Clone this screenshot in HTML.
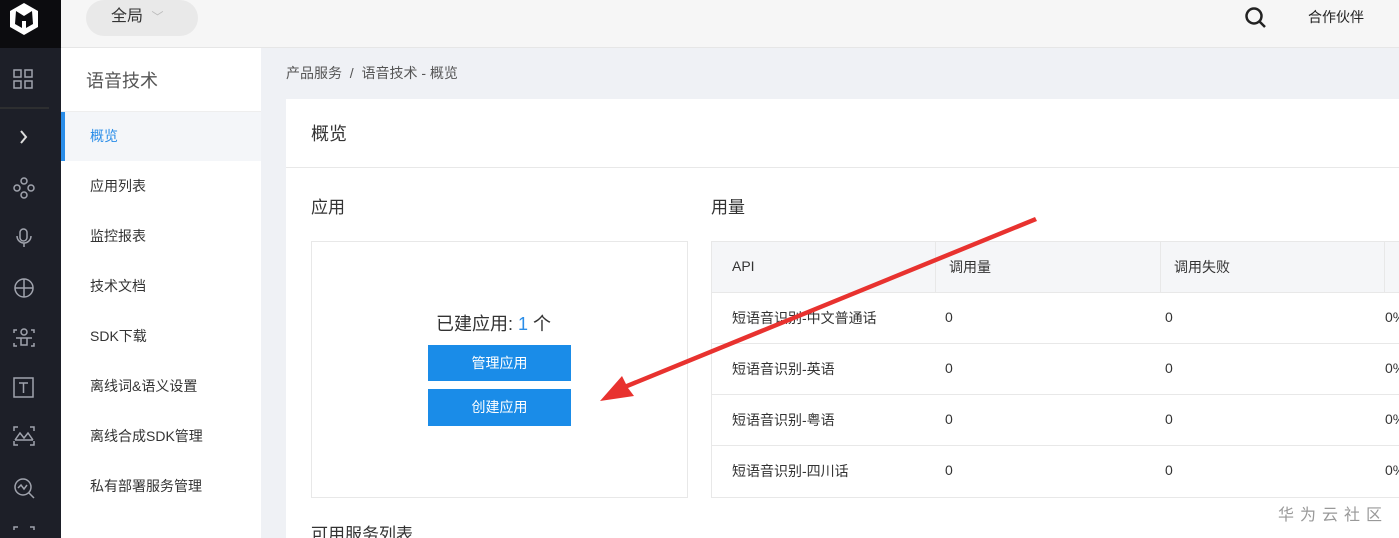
<!DOCTYPE html>
<html style="width:1399px;height:538px;overflow:hidden"><head><meta charset="utf-8"><style>
*{margin:0;padding:0;box-sizing:border-box}
body{width:1399px;height:538px;overflow:hidden;position:relative;background:#eff1f5;font-family:"Liberation Sans","Noto Sans CJK SC",sans-serif;color:#333}
.abs{position:absolute}
#rail{left:0;top:0;width:61px;height:538px;background:#1d1f28}
#logo{left:0;top:0;width:61px;height:48px;background:#0c0c0f}
#top{left:61px;top:0;width:1338px;height:48px;background:#f6f6f6;border-bottom:1px solid #e6e6e6}
#side{left:61px;top:48px;width:200px;height:490px;background:#fff}
.nav{position:absolute;left:29px;font-size:14px;color:#333}
.cell{position:absolute;font-size:14px;color:#333}
</style></head><body>
<div id="rail" class="abs"></div>
<div id="logo" class="abs">
<svg width="61" height="48"><path d="M24 3 L38 11 L38 27 L24 35 L10 27 L10 11 Z" fill="#fff"/><path d="M16 11 L24 16 L32 11 L33 24 L26 28 L26 21 L22 21 L22 28 L15 24 Z" fill="#0c0c0f"/></svg></div>
<svg class="abs" style="left:0;top:48px" width="61" height="490" fill="none" stroke="#a0a3ad" stroke-width="1.5">
<rect x="14" y="22" width="7" height="7"/><rect x="25" y="22" width="7" height="7"/><rect x="14" y="33" width="7" height="7"/><rect x="25" y="33" width="7" height="7"/>
<line x1="0" y1="60" x2="49" y2="60" stroke="#333"/>
<path d="M21 83 L26 89 L21 95" stroke="#ddd" stroke-width="2"/>
<circle cx="24" cy="133" r="3"/><circle cx="17" cy="140" r="3"/><circle cx="31" cy="140" r="3"/><circle cx="24" cy="147" r="3"/>
<rect x="20" y="181" width="7" height="12" rx="3.5"/><path d="M17 188 a7 7 0 0 0 14 0 M24 195 v4"/>
<circle cx="24" cy="240" r="9"/><path d="M15 240 h18 M24 231 v18"/>
<path d="M14 285 v-3 h3 M31 282 h3 v3 M14 295 v3 h3 M31 298 h3 v-3"/><circle cx="24" cy="284" r="3"/><path d="M16 290 h16 M21 290 v7 h6 v-7"/>
<rect x="14" y="330" width="19" height="19"/><path d="M19 335 h9 M23.5 335 v10"/>
<path d="M14 383 v-4 h4 M30 379 h4 v4 M14 393 v4 h4 M30 397 h4 v-4 M15 392 l5 -7 l4 5 l4 -5 l5 7 M15 392 h18"/>
<circle cx="23" cy="439" r="8"/><path d="M29 445 l5 5 M18 440 l3 -3 l3 4 l3 -4"/>
<path d="M14 482 v-3 h4 M30 479 h4 v3"/>
</svg>
<div id="top" class="abs">
<div class="abs" style="left:25px;top:0;width:112px;height:36px;border-radius:18px;background:#e9e9e9;font-size:16px;line-height:34px;padding-left:25px;color:#333">全局 <span style="color:#bbb;font-size:12px;margin-left:4px">﹀</span></div>
<svg class="abs" style="left:1182px;top:6px" width="26" height="26" fill="none" stroke="#222" stroke-width="2.5"><circle cx="11" cy="10" r="7.5"/><path d="M16.5 15.5 L22 21"/></svg>
<div class="abs" style="left:1247px;top:7px;font-size:14px;color:#222">合作伙伴</div>
</div>
<div id="side" class="abs">
<div class="abs" style="left:25px;top:19px;font-size:18px;color:#555">语音技术</div>
<div class="abs" style="left:0;top:63px;width:200px;height:1px;background:#eee"></div>
<div class="abs" style="left:0;top:64px;width:200px;height:49px;background:#f4f6f9;border-left:4px solid #2a8de8"></div>
<div class="nav" style="top:78px;color:#2a8de8">概览</div>
<div class="nav" style="top:128px">应用列表</div>
<div class="nav" style="top:178px">监控报表</div>
<div class="nav" style="top:228px">技术文档</div>
<div class="nav" style="top:278px">SDK下载</div>
<div class="nav" style="top:328px">离线词&amp;语义设置</div>
<div class="nav" style="top:378px">离线合成SDK管理</div>
<div class="nav" style="top:428px">私有部署服务管理</div>
</div>
<div class="abs" style="left:286px;top:63px;font-size:14px;color:#555">产品服务 &nbsp;/ &nbsp;语音技术 - 概览</div>
<div class="abs" style="left:286px;top:99px;width:1113px;height:439px;background:#fff"></div>
<div class="abs" style="left:311px;top:120px;font-size:18px;color:#333">概览</div>
<div class="abs" style="left:286px;top:167px;width:1113px;height:1px;background:#e8e8e8"></div>
<div class="abs" style="left:311px;top:193px;font-size:17px">应用</div>
<div class="abs" style="left:711px;top:193px;font-size:17px">用量</div>
<div class="abs" style="left:311px;top:241px;width:377px;height:257px;border:1px solid #e8e8e8"></div>
<div class="abs" style="left:436px;top:310px;font-size:18px;color:#333">已建应用: <span style="color:#2a8de8">1</span> 个</div>
<div class="abs" style="left:428px;top:345px;width:143px;height:36px;background:#1a8ce8;color:#fff;font-size:14px;text-align:center;line-height:36px">管理应用</div>
<div class="abs" style="left:428px;top:389px;width:143px;height:37px;background:#1a8ce8;color:#fff;font-size:14px;text-align:center;line-height:37px">创建应用</div>
<div class="abs" style="left:711px;top:241px;width:688px;height:257px;border:1px solid #e8e8e8;border-right:none"></div>
<div class="abs" style="left:712px;top:242px;width:687px;height:50px;background:#f5f6f8"></div>
<div class="abs" style="left:935px;top:242px;width:1px;height:50px;background:#e8e8e8"></div>
<div class="abs" style="left:1160px;top:242px;width:1px;height:50px;background:#e8e8e8"></div>
<div class="abs" style="left:1384px;top:242px;width:1px;height:50px;background:#e8e8e8"></div>
<div class="cell" style="left:732px;top:258px">API</div>
<div class="cell" style="left:949px;top:257px">调用量</div>
<div class="cell" style="left:1174px;top:257px">调用失败</div>
<div class="abs" style="left:712px;top:292px;width:687px;height:1px;background:#e8e8e8"></div>
<div class="abs" style="left:712px;top:343px;width:687px;height:1px;background:#e8e8e8"></div>
<div class="abs" style="left:712px;top:394px;width:687px;height:1px;background:#e8e8e8"></div>
<div class="abs" style="left:712px;top:445px;width:687px;height:1px;background:#e8e8e8"></div>
<div class="cell" style="left:732px;top:308px">短语音识别-中文普通话</div><div class="cell" style="left:945px;top:309px">0</div><div class="cell" style="left:1165px;top:309px">0</div><div class="cell" style="left:1385px;top:309px">0%</div>
<div class="cell" style="left:732px;top:359px">短语音识别-英语</div><div class="cell" style="left:945px;top:360px">0</div><div class="cell" style="left:1165px;top:360px">0</div><div class="cell" style="left:1385px;top:360px">0%</div>
<div class="cell" style="left:732px;top:410px">短语音识别-粤语</div><div class="cell" style="left:945px;top:411px">0</div><div class="cell" style="left:1165px;top:411px">0</div><div class="cell" style="left:1385px;top:411px">0%</div>
<div class="cell" style="left:732px;top:461px">短语音识别-四川话</div><div class="cell" style="left:945px;top:462px">0</div><div class="cell" style="left:1165px;top:462px">0</div><div class="cell" style="left:1385px;top:462px">0%</div>
<div class="abs" style="left:311px;top:520px;font-size:17px">可用服务列表</div>
<div class="abs" style="left:1278px;top:501px;font-size:16px;color:#999;letter-spacing:6px">华为云社区</div>
<svg class="abs" style="left:0;top:0" width="1399" height="538"><polygon points="1035,217 1037,221 628,388 634,396 600,401 622,376 626,384" fill="#e8322f"/></svg>
</body></html>
